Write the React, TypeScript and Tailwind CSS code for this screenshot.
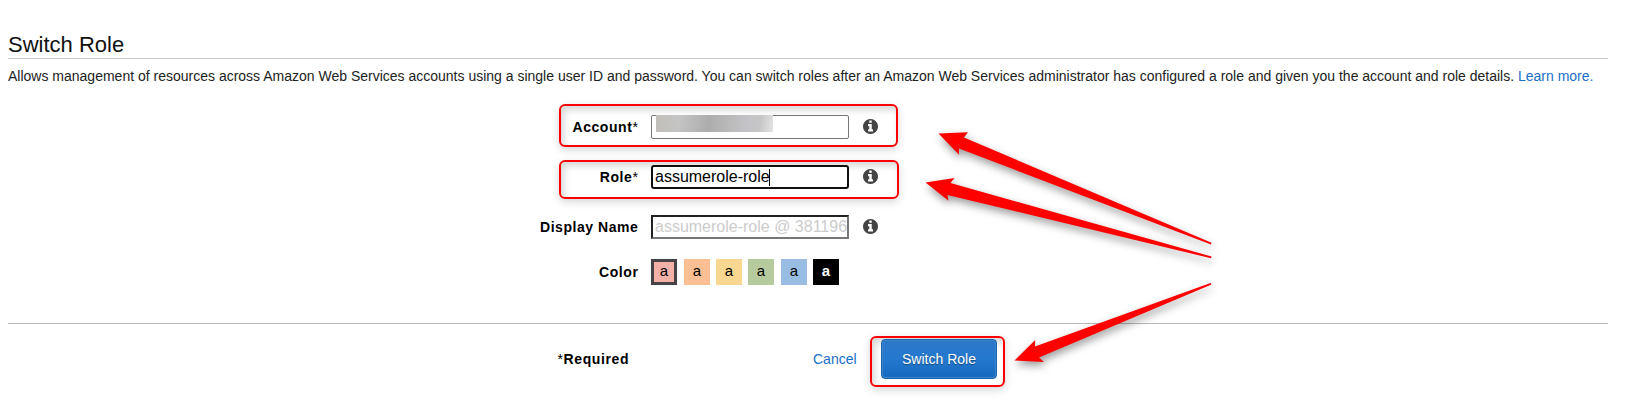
import type { ReactNode } from "react";

const swatches = [
  "bg-[#f2b0a9] border-[3px] border-[#444] mr-[7px]",
  "bg-[#fbbf93] mr-1.5",
  "bg-[#fad791] mr-1.5",
  "bg-[#b7ca9d] mr-[7px]",
  "bg-[#99bce3] mr-1.5",
  "bg-black text-white font-bold",
];

function InfoIcon() {
  return (
    <svg className="-mt-px ml-[14px] size-[15px] fill-[#444]" viewBox="0 128 1536 1536">
      <path d="M1024 1376v-160q0-14-9-23t-23-9h-96v-512q0-14-9-23t-23-9h-320q-14 0-23 9t-9 23v160q0 14 9 23t23 9h96v320h-96q-14 0-23 9t-9 23v160q0 14 9 23t23 9h448q14 0 23-9t9-23zm-128-896v-160q0-14-9-23t-23-9h-192q-14 0-23 9t-9 23v160q0 14 9 23t23 9h192q14 0 23-9t9-23zm640 416q0 209-103 385.5t-279.5 279.5-385.5 103-385.5-103-279.5-279.5-103-385.5 103-385.5 279.5-279.5 385.5-103 385.5 103 279.5 279.5 103 385.5z" />
    </svg>
  );
}

function Row({ label, required, info = true, children }: { label: string; required?: boolean; info?: boolean; children: ReactNode }) {
  return (
    <div className="flex h-[26px] items-center">
      <div className="w-[638.4px] text-right text-[14px] font-bold tracking-[0.55px]">
        {label}
        {required && <span className="font-normal">*</span>}
      </div>
      <div className="ml-[12.6px] flex w-[198px]">{children}</div>
      {info && <InfoIcon />}
    </div>
  );
}

function Highlight({ className }: { className: string }) {
  return (
    <div
      className={`pointer-events-none absolute rounded-[6px] border-2 border-[#fb0007] shadow-[0_3px_8px_rgba(0,0,0,0.16),inset_3px_4px_7px_rgba(0,0,0,0.16)] ${className}`}
    />
  );
}

export default function App() {
  return (
    <div className="relative h-[419px] w-[1636px] overflow-hidden bg-white font-['Liberation_Sans',Arial,sans-serif] text-[14px] text-black">
      <Highlight className="top-[104px] left-[559px] h-[43px] w-[339px]" />
      <Highlight className="top-[160px] left-[559px] h-[39px] w-[340px]" />
      <Highlight className="top-[336px] left-[870px] h-[51px] w-[135px]" />

      <header className="mr-7 ml-2 flex h-[59px] items-end border-b border-[#c8c8c8]">
        <h1 className="text-[22px] leading-[26px] text-[#111]">Switch Role</h1>
      </header>
      <p className="ml-2 pt-[9px] leading-4 whitespace-nowrap text-[#222]">
        Allows management of resources across Amazon Web Services accounts using a single user ID and password. You can switch
        roles after an Amazon Web Services administrator has configured a role and given you the account and role details.{" "}
        <a className="text-[#1a6fc8]">Learn more.</a>
      </p>

      <form className="relative mt-[30px] flex flex-col gap-6">
        <Row label="Account" required>
          <div className="h-6 w-full rounded-[2px] border border-[#767676] bg-white pl-1">
            <div className="-mt-px h-[17px] w-[117px] bg-linear-[100deg,#c2bfb8_0%,#c4c4c4_20%,#adadad_45%,#b8b8b8_60%,#c4c3c8_78%,#c6c6c6_88%,#e4e4e6_100%]" />
          </div>
        </Row>
        <Row label="Role" required>
          <div className="flex h-6 w-full items-center rounded-[3px] border-2 border-[#101010] bg-white pl-0.5 text-[16px] leading-5">
            <span className="-mt-px">assumerole-role</span>
            <span className="-ml-px h-[17px] w-px bg-black" />
          </div>
        </Row>
        <Row label="Display Name">
          <div className="flex h-6 w-full items-center overflow-hidden border-2 border-t-[#222] border-r-[#767676] border-b-[#767676] border-l-[#222] bg-white pl-0.5">
            <span className="-mt-px text-[16px] leading-5 whitespace-nowrap text-[#ccc]">assumerole-role @ 381196</span>
          </div>
        </Row>
        <div className="-mt-[5px]">
          <Row label="Color" info={false}>
            {swatches.map((color, i) => (
              <div key={i} className={`flex size-[26px] shrink-0 items-center justify-center text-[15px] ${color}`}>
                <span className="-mt-px">a</span>
              </div>
            ))}
          </Row>
        </div>
      </form>

      <footer className="relative mt-[38px] mr-7 ml-2 flex border-t border-[#b8b8b8] pt-[15px]">
        <div className="ml-[549.5px] flex h-10 w-[255.5px] items-center font-bold tracking-[0.6px]">
          <span className="font-normal">*</span>Required
        </div>
        <a className="flex h-10 w-[68px] items-center text-[#1a6fc8]">Cancel</a>
        <button className="h-10 w-[116px] rounded-[4px] border border-[#1763ad] bg-linear-to-b from-[#2d78c8] via-[#2479cf] to-[#1468bd] text-white shadow-[inset_0_0_0_1px_#3d84ca] [text-shadow:0_1px_1px_rgba(0,0,0,0.4)]">
          Switch Role
        </button>
      </footer>

      <svg
        className="pointer-events-none absolute top-0 left-0 fill-[#fe0000] drop-shadow-[1px_4px_4px_rgba(0,0,0,0.4)]"
        width="1636"
        height="419"
        viewBox="0 0 1636 419"
      >
        <path d="M938.5 133.5 968 132.3 964 137.5 1211.5 242.8 1211 244.5 959 148.5 959 154.7Z" />
        <path d="M925.5 182.5 954.5 178 950.5 183 1211.5 256.5 1211 258.2 947.5 195 948.5 200.7Z" />
        <path d="M1014.5 360.5 1035.2 340 1035 346.5 1210.5 283 1211.5 284.5 1039 357.5 1044 362Z" />
      </svg>
    </div>
  );
}
